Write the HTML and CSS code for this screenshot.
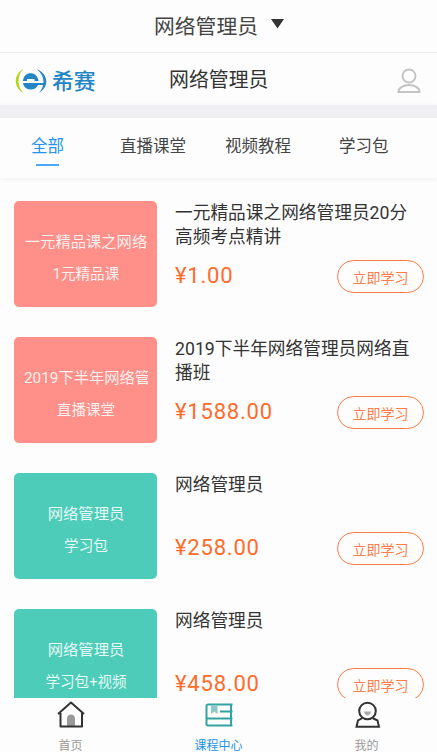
FILE: index.html
```html
<!DOCTYPE html>
<html lang="zh-CN">
<head>
<meta charset="utf-8">
<title>网络管理员</title>
<link rel="stylesheet" href="styles.css">
</head>
<body>
<div class="app">
  <header class="picker"><span>网络管理员</span><svg class="caret" viewBox="0 0 13 10"><path d="M0 0h13L6.5 9.5z"/></svg></header>
  <div class="brandbar">
    <div class="brand">
      <svg class="logo" viewBox="0 0 32 26">
        <path d="M8.500 1C-1.800 6-1.800 20 8.500 25C1.900 19 1.900 7 8.500 1z" fill="#b5d51d"/>
        <path d="M22 1.200C33.500 6 34.500 19 24 24.800C30.500 17 30 8 22 1.200z" fill="#2485c5"/>
        <path d="M8 13C8.500 2.500 22.500 2.500 23.500 13H19.500V11H12V13zM8 15H29V17H23C20.500 23 11 23 8.500 17z" fill="#2485c5"/>
      </svg>
      <span>希赛</span>
    </div>
    <h1>网络管理员</h1>
    <svg class="user" viewBox="0 0 24 26" fill="none" stroke="#c4c4c4" stroke-width="2"><circle cx="12" cy="8" r="6.500"/><path d="M1.500 24C1.500 14.800 22.500 14.800 22.500 24z"/></svg>
  </div>
  <nav class="tabs">
    <a class="tab active">全部</a><a class="tab live">直播课堂</a><a class="tab video">视频教程</a><a class="tab pack">学习包</a>
  </nav>
  <main class="list">
    <article class="course">
      <div class="thumb coral"><p class="name">一元精品课之网络</p><p class="kind">1元精品课</p></div>
      <div class="info"><h2>一元精品课之网络管理员20分高频考点精讲</h2><div class="buy"><span class="price">¥1.00</span><button>立即学习</button></div></div>
    </article>
    <article class="course">
      <div class="thumb coral"><p class="name">2019下半年网络管</p><p class="kind">直播课堂</p></div>
      <div class="info"><h2>2019下半年网络管理员网络直播班</h2><div class="buy"><span class="price">¥1588.00</span><button>立即学习</button></div></div>
    </article>
    <article class="course">
      <div class="thumb teal"><p class="name">网络管理员</p><p class="kind">学习包</p></div>
      <div class="info"><h2>网络管理员</h2><div class="buy"><span class="price">¥258.00</span><button>立即学习</button></div></div>
    </article>
    <article class="course">
      <div class="thumb teal"><p class="name">网络管理员</p><p class="kind">学习包+视频</p></div>
      <div class="info"><h2>网络管理员</h2><div class="buy"><span class="price">¥458.00</span><button>立即学习</button></div></div>
    </article>
  </main>
  <footer class="bottom">
    <a><svg viewBox="0 0 28 28"><path d="M10 25.500V17.500C10 12 18 12 18 17.500V25.500z" fill="#999"/><path d="M1 13L14 1.500L27 13M3.500 12V25.500H25V12" fill="none" stroke="#333" stroke-width="2" stroke-linejoin="round"/></svg><span>首页</span></a>
    <a class="current"><svg viewBox="0 0 28 28" fill="none" stroke="#35a3a3" stroke-width="2"><path d="M27.500 3.500H3Q1.500 3.500 1.500 5V23Q1.500 24.500 3 24.500H27.500M2 17.500H27.500M26 3.500V24.500M15 10.500H27.500"/><path d="M6 4.500H12.500V13L9.200 10.500L6 13z" fill="#8bc8c6" stroke="none"/></svg><span>课程中心</span></a>
    <a><svg viewBox="0 0 28 28" fill="none" stroke="#333" stroke-width="2"><circle cx="14.500" cy="10" r="8.300"/><path d="M9.500 17L5 19.500L3.500 25.800H26L24.500 19.500L19.500 17"/><path d="M11 10.500H18Q17 14.500 14.500 14.500Q12 14.500 11 10.500z" fill="#aaa" stroke="none"/></svg><span>我的</span></a>
  </footer>
</div>
</body>
</html>
```
FILE: styles.css
```css
* { box-sizing: border-box; }
body, h1, h2, p { margin: 0; }
body { font-family: Roboto, "Noto Sans CJK SC", sans-serif; font-weight: 400; color: #444; background: #fdfdfd; }
.app { height: 752px; display: flex; flex-direction: column; overflow: hidden; }
.picker { height: 53px; flex: none; display: flex; align-items: center; padding: 0 0 2px 154px; border-bottom: 1px solid #ececec; font-size: 20.8px; }
.caret { width: 13px; height: 10px; margin: 0 0 2px 13px; fill: #333; }
.brandbar { height: 52px; flex: none; display: grid; grid-template-columns: 154px 1fr 24px; align-items: center; padding: 0 16px 0 15px; }
.brand { display: flex; align-items: center; gap: 5px; color: #2485c5; font-size: 21.8px; font-weight: 500; line-height: 30px; padding-top: 4px; }
.brand span { padding-top: 2px; }
.logo { width: 32px; height: 26px; }
h1 { font-size: 19.9px; font-weight: 400; line-height: 28px; color: #333; padding-top: 3px; }
.user { width: 24px; height: 26px; margin-top: 4px; }
.tabs { height: 73px; flex: none; display: flex; border-top: 13px solid #eeeef3; box-shadow: 0 1px 5px #0000000f; padding: 17px 0 0 31px; font-size: 16.5px; line-height: 24px; }
.tab.active { color: #2593ef; }
.tab.active::after { content: ""; display: block; width: 23px; height: 2px; margin: 5px auto 0; background: #4ba9f3; }
.live { margin-left: 56px; }
.video { margin-left: 39px; }
.pack { margin-left: 48px; }
.list { flex: 1; min-height: 0; overflow: hidden; padding: 23px 13px 0 14px; }
.course { display: flex; gap: 18px; height: 106px; margin-bottom: 30px; }
.thumb { width: 143px; flex: none; border-radius: 5px; padding: 29px 9px 0 10px; color: #ffffffe0; text-align: center; }
.coral { background: #ff9089; }
.teal { background: #4dcdb9; }
.name { font-size: 15.3px; line-height: 24px; white-space: nowrap; overflow: hidden; }
.kind { font-size: 14.6px; line-height: 24px; margin-top: 8px; }
.info { flex: 1; min-width: 0; display: flex; flex-direction: column; }
h2 { height: 58px; padding-right: 12px; font-size: 17.7px; font-weight: 400; line-height: 24px; color: #333; }
.buy { display: flex; justify-content: space-between; height: 33px; }
.price { color: #ff6b2b; font-size: 22px; letter-spacing: .8px; line-height: 33px; }
button { width: 87px; height: 33px; margin-top: 1px; padding: 0; border: 1.500px solid #ff7943; border-radius: 17px; background: none; color: #ff7d49; font: inherit; font-size: 14px; }
.bottom { height: 54px; flex: none; display: grid; grid-template-columns: 141px 155px 141px; font-size: 12px; color: #999; background: #fdfdfd; }
.bottom a { display: flex; flex-direction: column; align-items: center; line-height: 17px; }
.bottom svg { width: 28px; height: 28px; margin: 3px 0 9px; }
.bottom .current { color: #2593ef; }
```
